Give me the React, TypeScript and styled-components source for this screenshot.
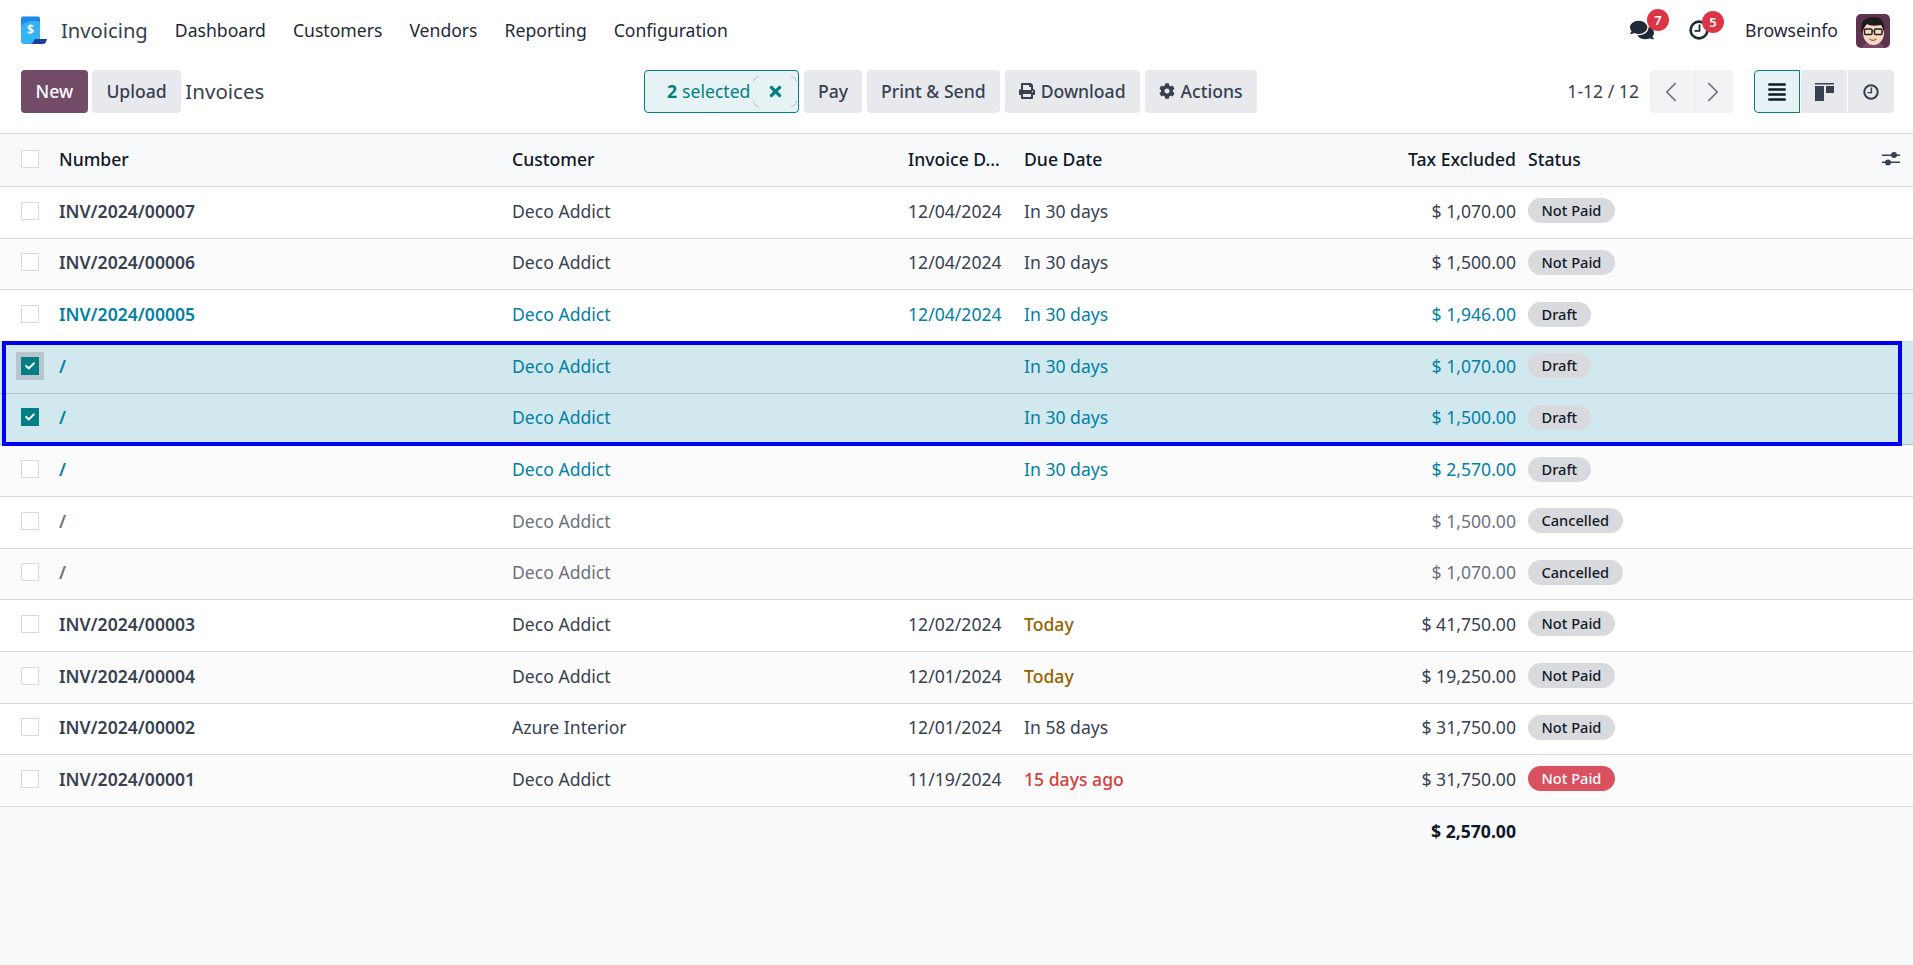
import React from 'react';
import styled, { createGlobalStyle } from 'styled-components';
import { FaComments, FaPrint, FaCog, FaAlignJustify, FaCheck, FaTimes } from 'react-icons/fa';
import { ChevronLeft, ChevronRight } from 'lucide-react';

const GlobalStyle = createGlobalStyle`
  html, body { margin: 0; padding: 0; background: #fff; }
  body { font-family: "Noto Sans", "Open Sans", sans-serif; font-size: 17.6px; color: #374151; }
  * { box-sizing: border-box; }
`;

const Page = styled.div`
  min-height: 965px;
  display: flex;
  flex-direction: column;
  background: #f8f9fb;
`;

/* top bar */
const TopBar = styled.header`
  height: 61px;
  background: #fff;
  display: flex;
  align-items: center;
  padding: 0 20px 2px;
`;

const AppName = styled.span`
  font-size: 20.2px;
  margin-left: 14px;
  margin-right: 27px;
`;

const Menu = styled.nav`
  display: flex;
  gap: 27px;
  color: #1f2937;
`;

const Systray = styled.div`
  margin-left: auto;
  display: flex;
  align-items: center;
  color: #1f2937;
`;

const TrayIcon = styled.span<{ $gap: number; $badgeLeft: number }>`
  position: relative;
  display: inline-flex;
  margin-right: ${(p) => p.$gap}px;
  font-size: 24px;
  & > span { left: ${(p) => p.$badgeLeft}px; }
`;

const Badge = styled.span`
  position: absolute;
  top: -9px;
  width: 22px;
  height: 22px;
  border-radius: 50%;
  background: #dc3545;
  color: #fff;
  font-size: 13px;
  font-weight: 600;
  display: flex;
  align-items: center;
  justify-content: center;
`;

const UserName = styled.span`
  margin-right: 18px;
`;

const Avatar = styled.svg`
  width: 34px;
  height: 34px;
  border-radius: 5px;
  margin: 2px 3px 0 0;
`;

/* control panel */
const ControlPanel = styled.div`
  height: 72px;
  background: #fff;
  display: grid;
  grid-template-columns: 623px 1fr auto;
  align-items: start;
  padding: 9px 19px 0 21px;
`;

const ButtonRow = styled.div<{ $gap: number }>`
  display: flex;
  align-items: center;
  gap: ${(p) => p.$gap}px;
`;

const Button = styled.button<{ $primary?: boolean }>`
  height: 43px;
  padding: 0 14px 2px;
  border: 0;
  border-radius: 4px;
  background: ${(p) => (p.$primary ? '#714b67' : '#e7e9ed')};
  color: ${(p) => (p.$primary ? '#fff' : '#374151')};
  font-family: inherit;
  font-size: 17.6px;
  font-weight: 500;
  display: inline-flex;
  align-items: center;
  gap: 6px;
  white-space: nowrap;
`;

const LeadButton = styled(Button)`
  padding: 0 14.6px 2px;
`;

const Breadcrumb = styled.span`
  font-size: 20.5px;
  padding-bottom: 2px;
`;

const SelectedChip = styled.div`
  width: 155px;
  height: 43px;
  border: 1px solid #017e84;
  border-radius: 4px;
  background: #e6f2f3;
  color: #017e84;
  display: flex;
  align-items: center;
  padding-left: 22px;
  white-space: nowrap;
  b { font-weight: 700; margin-right: 5px; }
`;

const ChipText = styled.span`
  padding-bottom: 2px;
`;

const ChipClose = styled.span`
  position: relative;
  margin: 0 1px 0 auto;
  width: 44px;
  height: 100%;
  display: flex;
  align-items: center;
  justify-content: center;
  font-size: 17px;
  &::before {
    content: '';
    position: absolute;
    inset: 5px 0;
    border: 1px solid #aeb5bb;
    border-radius: 6px;
    -webkit-mask:
      linear-gradient(#000 0 0) 0 0 / 6px 6px no-repeat,
      linear-gradient(#000 0 0) 100% 0 / 6px 6px no-repeat,
      linear-gradient(#000 0 0) 0 100% / 6px 6px no-repeat,
      linear-gradient(#000 0 0) 100% 100% / 6px 6px no-repeat;
  }
`;

const RightTools = styled.div`
  display: flex;
  align-items: center;
`;

const PagerText = styled.span`
  margin-right: 11px;
  padding-bottom: 2px;
  white-space: nowrap;
`;

const Segmented = styled.div`
  display: flex;
  gap: 1px;
  border-radius: 4px;
  overflow: hidden;
`;

const PagerButton = styled.span`
  width: 41px;
  height: 43px;
  background: #f1f2f4;
  color: #6b7280;
  display: flex;
  align-items: center;
  justify-content: center;
`;

const Views = styled(Segmented)`
  margin-left: 21px;
`;

const ViewButton = styled.span<{ $active?: boolean }>`
  width: 46px;
  height: 43px;
  background: ${(p) => (p.$active ? '#e6f2f3' : '#e7e9ed')};
  border: ${(p) => (p.$active ? '1px solid #017e84' : '0')};
  border-radius: ${(p) => (p.$active ? '4px 0 0 4px' : '0')};
  color: ${(p) => (p.$active ? '#111827' : '#374151')};
  display: flex;
  align-items: center;
  justify-content: center;
  font-size: 20px;
`;

/* list */
const COLUMNS = '59px 453px 396px 116px 256px 248px 1fr';

const HeadRow = styled.div`
  height: 54px;
  display: grid;
  grid-template-columns: ${COLUMNS};
  align-items: center;
  padding-bottom: 2px;
  background: #f8f9fb;
  border-top: 1px solid #d8dadd;
  border-bottom: 1px solid #d8dadd;
  color: #111827;
  font-weight: 500;
`;

const Row = styled.div<{ $selected?: boolean; $tone: string; $odd: boolean }>`
  height: 51.67px;
  display: grid;
  grid-template-columns: ${COLUMNS};
  align-items: center;
  padding-bottom: 3px;
  border-bottom: 1px solid ${(p) => (p.$selected ? '#a8c4cb' : '#d8dadd')};
  background: ${(p) => (p.$selected ? '#d1e9ee' : p.$odd ? '#fbfbfb' : '#fff')};
  color: ${(p) => (p.$tone === 'info' ? '#0180a5' : p.$tone === 'muted' ? '#6b7280' : '#374151')};
`;

const SelectedGroup = styled.div`
  position: relative;
  &::after {
    content: '';
    position: absolute;
    top: -1px;
    left: 2px;
    right: 11px;
    bottom: -1px;
    border: 4px solid #0000f0;
    pointer-events: none;
  }
`;

const CheckCell = styled.div`
  display: flex;
  justify-content: center;
`;

const Check = styled.span<{ $checked?: boolean; $focus?: boolean }>`
  width: 18px;
  height: 18px;
  border: 1px solid ${(p) => (p.$checked ? '#017e84' : '#d8dadd')};
  background: ${(p) => (p.$checked ? '#017e84' : '#fff')};
  color: #fff;
  font-size: 10px;
  display: flex;
  align-items: center;
  justify-content: center;
  box-shadow: ${(p) => (p.$focus ? '0 0 0 5px #b8c4ce' : 'none')};
`;

const NameCell = styled.div`
  font-weight: 600;
`;

const DueCell = styled.div<{ $state?: string }>`
  color: ${(p) => (p.$state === 'today' ? '#946300' : p.$state === 'late' ? '#d23f3a' : 'inherit')};
  font-weight: ${(p) => (p.$state ? 500 : 400)};
`;

const AmountCell = styled.div`
  text-align: right;
  padding-right: 12px;
`;

const StatusPill = styled.span<{ $danger?: boolean }>`
  display: inline-block;
  height: 25px;
  line-height: 24px;
  margin-top: -4px;
  padding: 0 13.5px;
  border-radius: 13px;
  font-size: 14.6px;
  font-weight: 500;
  background: ${(p) => (p.$danger ? '#d9505f' : '#d8dadd')};
  color: ${(p) => (p.$danger ? '#fff' : '#111827')};
  vertical-align: middle;
`;

const StatusHead = styled.div`
  display: flex;
  align-items: center;
  justify-content: space-between;
  padding-right: 13px;
`;

const TotalRow = styled.div`
  display: grid;
  grid-template-columns: ${COLUMNS};
  height: 51px;
  padding-bottom: 2px;
  align-items: center;
  font-weight: 700;
  color: #111827;
`;

const Spacer = styled.div`
  grid-column: 1 / 6;
`;

type Inv = {
  name: string;
  customer: string;
  date: string;
  due: string;
  amount: string;
  status: string;
  tone: string;
  dueState?: string;
  danger?: boolean;
  checked?: boolean;
  focus?: boolean;
};

const invoices: Inv[] = [
  { name: 'INV/2024/00007', customer: 'Deco Addict', date: '12/04/2024', due: 'In 30 days', amount: '$ 1,070.00', status: 'Not Paid', tone: '' },
  { name: 'INV/2024/00006', customer: 'Deco Addict', date: '12/04/2024', due: 'In 30 days', amount: '$ 1,500.00', status: 'Not Paid', tone: '' },
  { name: 'INV/2024/00005', customer: 'Deco Addict', date: '12/04/2024', due: 'In 30 days', amount: '$ 1,946.00', status: 'Draft', tone: 'info' },
  { name: '/', customer: 'Deco Addict', date: '', due: 'In 30 days', amount: '$ 1,070.00', status: 'Draft', tone: 'info', checked: true, focus: true },
  { name: '/', customer: 'Deco Addict', date: '', due: 'In 30 days', amount: '$ 1,500.00', status: 'Draft', tone: 'info', checked: true },
  { name: '/', customer: 'Deco Addict', date: '', due: 'In 30 days', amount: '$ 2,570.00', status: 'Draft', tone: 'info' },
  { name: '/', customer: 'Deco Addict', date: '', due: '', amount: '$ 1,500.00', status: 'Cancelled', tone: 'muted' },
  { name: '/', customer: 'Deco Addict', date: '', due: '', amount: '$ 1,070.00', status: 'Cancelled', tone: 'muted' },
  { name: 'INV/2024/00003', customer: 'Deco Addict', date: '12/02/2024', due: 'Today', amount: '$ 41,750.00', status: 'Not Paid', tone: '', dueState: 'today' },
  { name: 'INV/2024/00004', customer: 'Deco Addict', date: '12/01/2024', due: 'Today', amount: '$ 19,250.00', status: 'Not Paid', tone: '', dueState: 'today' },
  { name: 'INV/2024/00002', customer: 'Azure Interior', date: '12/01/2024', due: 'In 58 days', amount: '$ 31,750.00', status: 'Not Paid', tone: '' },
  { name: 'INV/2024/00001', customer: 'Deco Addict', date: '11/19/2024', due: '15 days ago', amount: '$ 31,750.00', status: 'Not Paid', tone: '', dueState: 'late', danger: true },
];

const LogoIcon = () => (
  <svg width="27" height="28" viewBox="0 0 27 28">
    <path d="M1 2.500A2 2 0 0 1 3 .5h15a2 2 0 0 1 2 2V23H3a2 2 0 0 1-2-2z" fill="#1e88f0" />
    <path d="M1 10c5-5 12-6 19-4v17c0 3-2 5-4 5H4a3 3 0 0 1-3-3z" fill="#35b4f5" />
    <path d="M11 28c2-1 3-3 3.500-5H27c-.5 3-2 5-4 5z" fill="#1c3f9e" />
    <text x="10.500" y="18" fontSize="12" fontWeight="700" fill="#fff" textAnchor="middle" fontFamily="Noto Sans">$</text>
  </svg>
);

const ClockIcon = ({ size }: { size: number }) => (
  <svg width={size} height={size} viewBox="0 0 20 20" fill="none" stroke="currentColor">
    <circle cx="10" cy="10" r="8.400" strokeWidth="2.600" />
    <path d="M10.500 4.500v6.300H5.500" strokeWidth="1.800" />
  </svg>
);

const KanbanIcon = () => (
  <svg width="19" height="18" viewBox="0 0 19 18" fill="#374151">
    <rect x="0" y="0" width="19" height="1.500" />
    <rect x="0" y="3" width="9" height="15" />
    <rect x="11" y="3" width="8" height="7" />
  </svg>
);

const SlidersIcon = () => (
  <svg width="18" height="16" viewBox="0 0 18 16" fill="#374151">
    <rect x="0" y="3.500" width="18" height="1.500" />
    <rect x="0" y="10.500" width="18" height="1.500" />
    <circle cx="12" cy="4" r="3" />
    <circle cx="6" cy="11.500" r="3" />
  </svg>
);

const AvatarArt = () => (
  <Avatar viewBox="0 0 34 34">
    <rect width="34" height="34" fill="#5e3350" />
    <path d="M6 34c1-4 5-6 11-6s10 2 11 6z" fill="#7a4a68" />
    <ellipse cx="17.500" cy="19" rx="10.500" ry="12" fill="#f6d9c2" />
    <path d="M6 19C3 8 9 2 19 3c7 .5 10 6 9 15-1-3-2-6-3-7-6 1-11 1-14-1-2 2-4 5-5 9z" fill="#1f1a1c" />
    <rect x="8.500" y="15" width="7.500" height="5.500" rx="1" fill="none" stroke="#222" strokeWidth="1.500" />
    <rect x="18.500" y="15" width="7.500" height="5.500" rx="1" fill="none" stroke="#222" strokeWidth="1.500" />
    <path d="M16 17h2.500" stroke="#222" strokeWidth="1.200" />
    <path d="M13.500 25c2 1.500 5 1.500 7 0" fill="none" stroke="#a8503f" strokeWidth="1.100" />
  </Avatar>
);

const InvoiceRow = ({ inv, odd }: { inv: Inv; odd: boolean }) => (
  <Row $selected={inv.checked} $tone={inv.tone} $odd={odd}>
    <CheckCell>
      <Check $checked={inv.checked} $focus={inv.focus}>
        {inv.checked && <FaCheck />}
      </Check>
    </CheckCell>
    <NameCell>{inv.name}</NameCell>
    <div>{inv.customer}</div>
    <div>{inv.date}</div>
    <DueCell $state={inv.dueState}>{inv.due}</DueCell>
    <AmountCell>{inv.amount}</AmountCell>
    <div>
      <StatusPill $danger={inv.danger}>{inv.status}</StatusPill>
    </div>
  </Row>
);

export default function App() {
  return (
    <Page>
      <GlobalStyle />
      <TopBar>
        <LogoIcon />
        <AppName>Invoicing</AppName>
        <Menu>
          <span>Dashboard</span>
          <span>Customers</span>
          <span>Vendors</span>
          <span>Reporting</span>
          <span>Configuration</span>
        </Menu>
        <Systray>
          <TrayIcon $gap={35} $badgeLeft={17}>
            <FaComments />
            <Badge>7</Badge>
          </TrayIcon>
          <TrayIcon $gap={36} $badgeLeft={13}>
            <ClockIcon size={20} />
            <Badge>5</Badge>
          </TrayIcon>
          <UserName>Browseinfo</UserName>
          <AvatarArt />
        </Systray>
      </TopBar>

      <ControlPanel>
        <ButtonRow $gap={4}>
          <LeadButton $primary>New</LeadButton>
          <LeadButton>Upload</LeadButton>
          <Breadcrumb>Invoices</Breadcrumb>
        </ButtonRow>
        <ButtonRow $gap={5}>
          <SelectedChip>
            <ChipText><b>2</b>selected</ChipText>
            <ChipClose><FaTimes /></ChipClose>
          </SelectedChip>
          <Button>Pay</Button>
          <Button>Print &amp; Send</Button>
          <Button><FaPrint size={16} /> Download</Button>
          <Button><FaCog size={16} /> Actions</Button>
        </ButtonRow>
        <RightTools>
          <PagerText>1-12 / 12</PagerText>
          <Segmented>
            <PagerButton><ChevronLeft size={34} strokeWidth={1.2} /></PagerButton>
            <PagerButton><ChevronRight size={34} strokeWidth={1.2} /></PagerButton>
          </Segmented>
          <Views>
            <ViewButton $active><FaAlignJustify /></ViewButton>
            <ViewButton><KanbanIcon /></ViewButton>
            <ViewButton><ClockIcon size={16} /></ViewButton>
          </Views>
        </RightTools>
      </ControlPanel>

      <HeadRow>
        <CheckCell><Check /></CheckCell>
        <div>Number</div>
        <div>Customer</div>
        <div>Invoice D...</div>
        <div>Due Date</div>
        <AmountCell>Tax Excluded</AmountCell>
        <StatusHead>
          <span>Status</span>
          <SlidersIcon />
        </StatusHead>
      </HeadRow>

      <div>
        {invoices.slice(0, 3).map((inv, i) => (
          <InvoiceRow key={i} inv={inv} odd={i % 2 === 1} />
        ))}
        <SelectedGroup>
          {invoices.slice(3, 5).map((inv, i) => (
            <InvoiceRow key={i} inv={inv} odd={false} />
          ))}
        </SelectedGroup>
        {invoices.slice(5).map((inv, i) => (
          <InvoiceRow key={i} inv={inv} odd={(i + 5) % 2 === 1} />
        ))}
      </div>

      <TotalRow>
        <Spacer />
        <AmountCell>$ 2,570.00</AmountCell>
      </TotalRow>
    </Page>
  );
}
